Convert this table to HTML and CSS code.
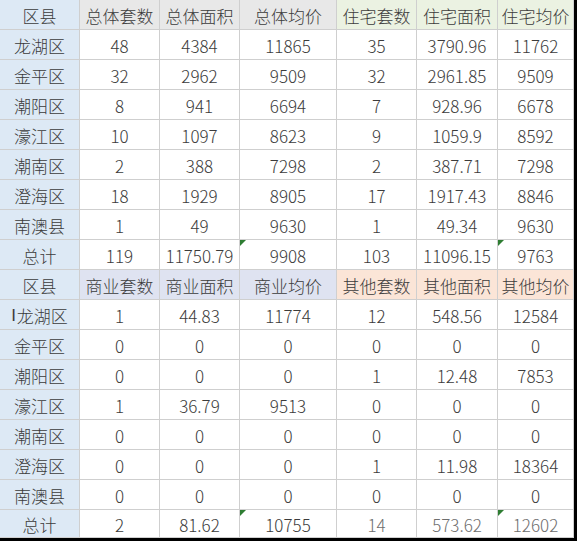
FILE: index.html
```html
<!DOCTYPE html>
<html lang="zh">
<head>
<meta charset="utf-8">
<link rel="stylesheet" href="styles.css">
</head>
<body>
<div class="sheet">
  <div class="c dist">区县</div><div class="c h-gray">总体套数</div><div class="c h-gray">总体面积</div><div class="c h-gray">总体均价</div><div class="c h-green">住宅套数</div><div class="c h-green">住宅面积</div><div class="c h-green">住宅均价</div>

  <div class="c dist">龙湖区</div><div class="c">48</div><div class="c">4384</div><div class="c">11865</div><div class="c">35</div><div class="c">3790.96</div><div class="c">11762</div>
  <div class="c dist">金平区</div><div class="c">32</div><div class="c">2962</div><div class="c">9509</div><div class="c">32</div><div class="c">2961.85</div><div class="c">9509</div>
  <div class="c dist">潮阳区</div><div class="c">8</div><div class="c">941</div><div class="c">6694</div><div class="c">7</div><div class="c">928.96</div><div class="c">6678</div>
  <div class="c dist">濠江区</div><div class="c">10</div><div class="c">1097</div><div class="c">8623</div><div class="c">9</div><div class="c">1059.9</div><div class="c">8592</div>
  <div class="c dist">潮南区</div><div class="c">2</div><div class="c">388</div><div class="c">7298</div><div class="c">2</div><div class="c">387.71</div><div class="c">7298</div>
  <div class="c dist">澄海区</div><div class="c">18</div><div class="c">1929</div><div class="c">8905</div><div class="c">17</div><div class="c">1917.43</div><div class="c">8846</div>
  <div class="c dist">南澳县</div><div class="c">1</div><div class="c">49</div><div class="c">9630</div><div class="c">1</div><div class="c">49.34</div><div class="c">9630</div>
  <div class="c dist">总计</div><div class="c">119</div><div class="c">11750.79</div><div class="c flag">9908</div><div class="c">103</div><div class="c">11096.15</div><div class="c flag">9763</div>

  <div class="c dist">区县</div><div class="c h-blue">商业套数</div><div class="c h-blue">商业面积</div><div class="c h-blue">商业均价</div><div class="c h-peach">其他套数</div><div class="c h-peach">其他面积</div><div class="c h-peach">其他均价</div>

  <div class="c dist"><span class="cursor">I</span>龙湖区</div><div class="c">1</div><div class="c">44.83</div><div class="c">11774</div><div class="c">12</div><div class="c">548.56</div><div class="c">12584</div>
  <div class="c dist">金平区</div><div class="c">0</div><div class="c">0</div><div class="c">0</div><div class="c">0</div><div class="c">0</div><div class="c">0</div>
  <div class="c dist">潮阳区</div><div class="c">0</div><div class="c">0</div><div class="c">0</div><div class="c">1</div><div class="c">12.48</div><div class="c">7853</div>
  <div class="c dist">濠江区</div><div class="c">1</div><div class="c">36.79</div><div class="c">9513</div><div class="c">0</div><div class="c">0</div><div class="c">0</div>
  <div class="c dist">潮南区</div><div class="c">0</div><div class="c">0</div><div class="c">0</div><div class="c">0</div><div class="c">0</div><div class="c">0</div>
  <div class="c dist">澄海区</div><div class="c">0</div><div class="c">0</div><div class="c">0</div><div class="c">1</div><div class="c">11.98</div><div class="c">18364</div>
  <div class="c dist">南澳县</div><div class="c">0</div><div class="c">0</div><div class="c">0</div><div class="c">0</div><div class="c">0</div><div class="c">0</div>
  <div class="c dist">总计</div><div class="c">2</div><div class="c">81.62</div><div class="c flag">10755</div><div class="c faded">14</div><div class="c faded">573.62</div><div class="c flag faded">12602</div>
</div>
</body>
</html>
```

FILE: styles.css
```css
html, body {
  margin: 0;
  padding: 0;
  background: #ffffff;
}

.sheet {
  display: grid;
  grid-template-columns: 80px 80px 80px 97px 80px 81px 76px;
  grid-template-rows: repeat(17, 30px) 28px;
  width: 574px;
  border-right: 3px solid #000;
  border-bottom: 3px solid #000;
  font-family: "Noto Sans CJK SC", "Noto Sans", sans-serif;
  font-size: 17px;
  font-weight: 300;
  color: #3b3b3b;
}

.c {
  position: relative;
  box-sizing: border-box;
  border-right: 1px solid #cfcfcf;
  border-bottom: 1px solid #cfcfcf;
  display: flex;
  align-items: center;
  justify-content: center;
  padding-top: 2px;
  line-height: 1;
  white-space: nowrap;
  background: #ffffff;
}

.dist { background: #dde9f5; }
.h-gray { background: #e8e8e8; }
.h-green { background: #ebf2e2; }
.h-blue { background: #dfe3f1; }
.h-peach { background: #fbe5d7; }

.cursor {
  font-family: "Liberation Sans", sans-serif;
  margin-right: 1px;
}

.flag::before {
  content: "";
  position: absolute;
  left: 0;
  top: 0;
  width: 0;
  height: 0;
  border-top: 6px solid #2e7d32;
  border-right: 6px solid transparent;
}

.faded {
  color: #6e6e6e;
}
```
